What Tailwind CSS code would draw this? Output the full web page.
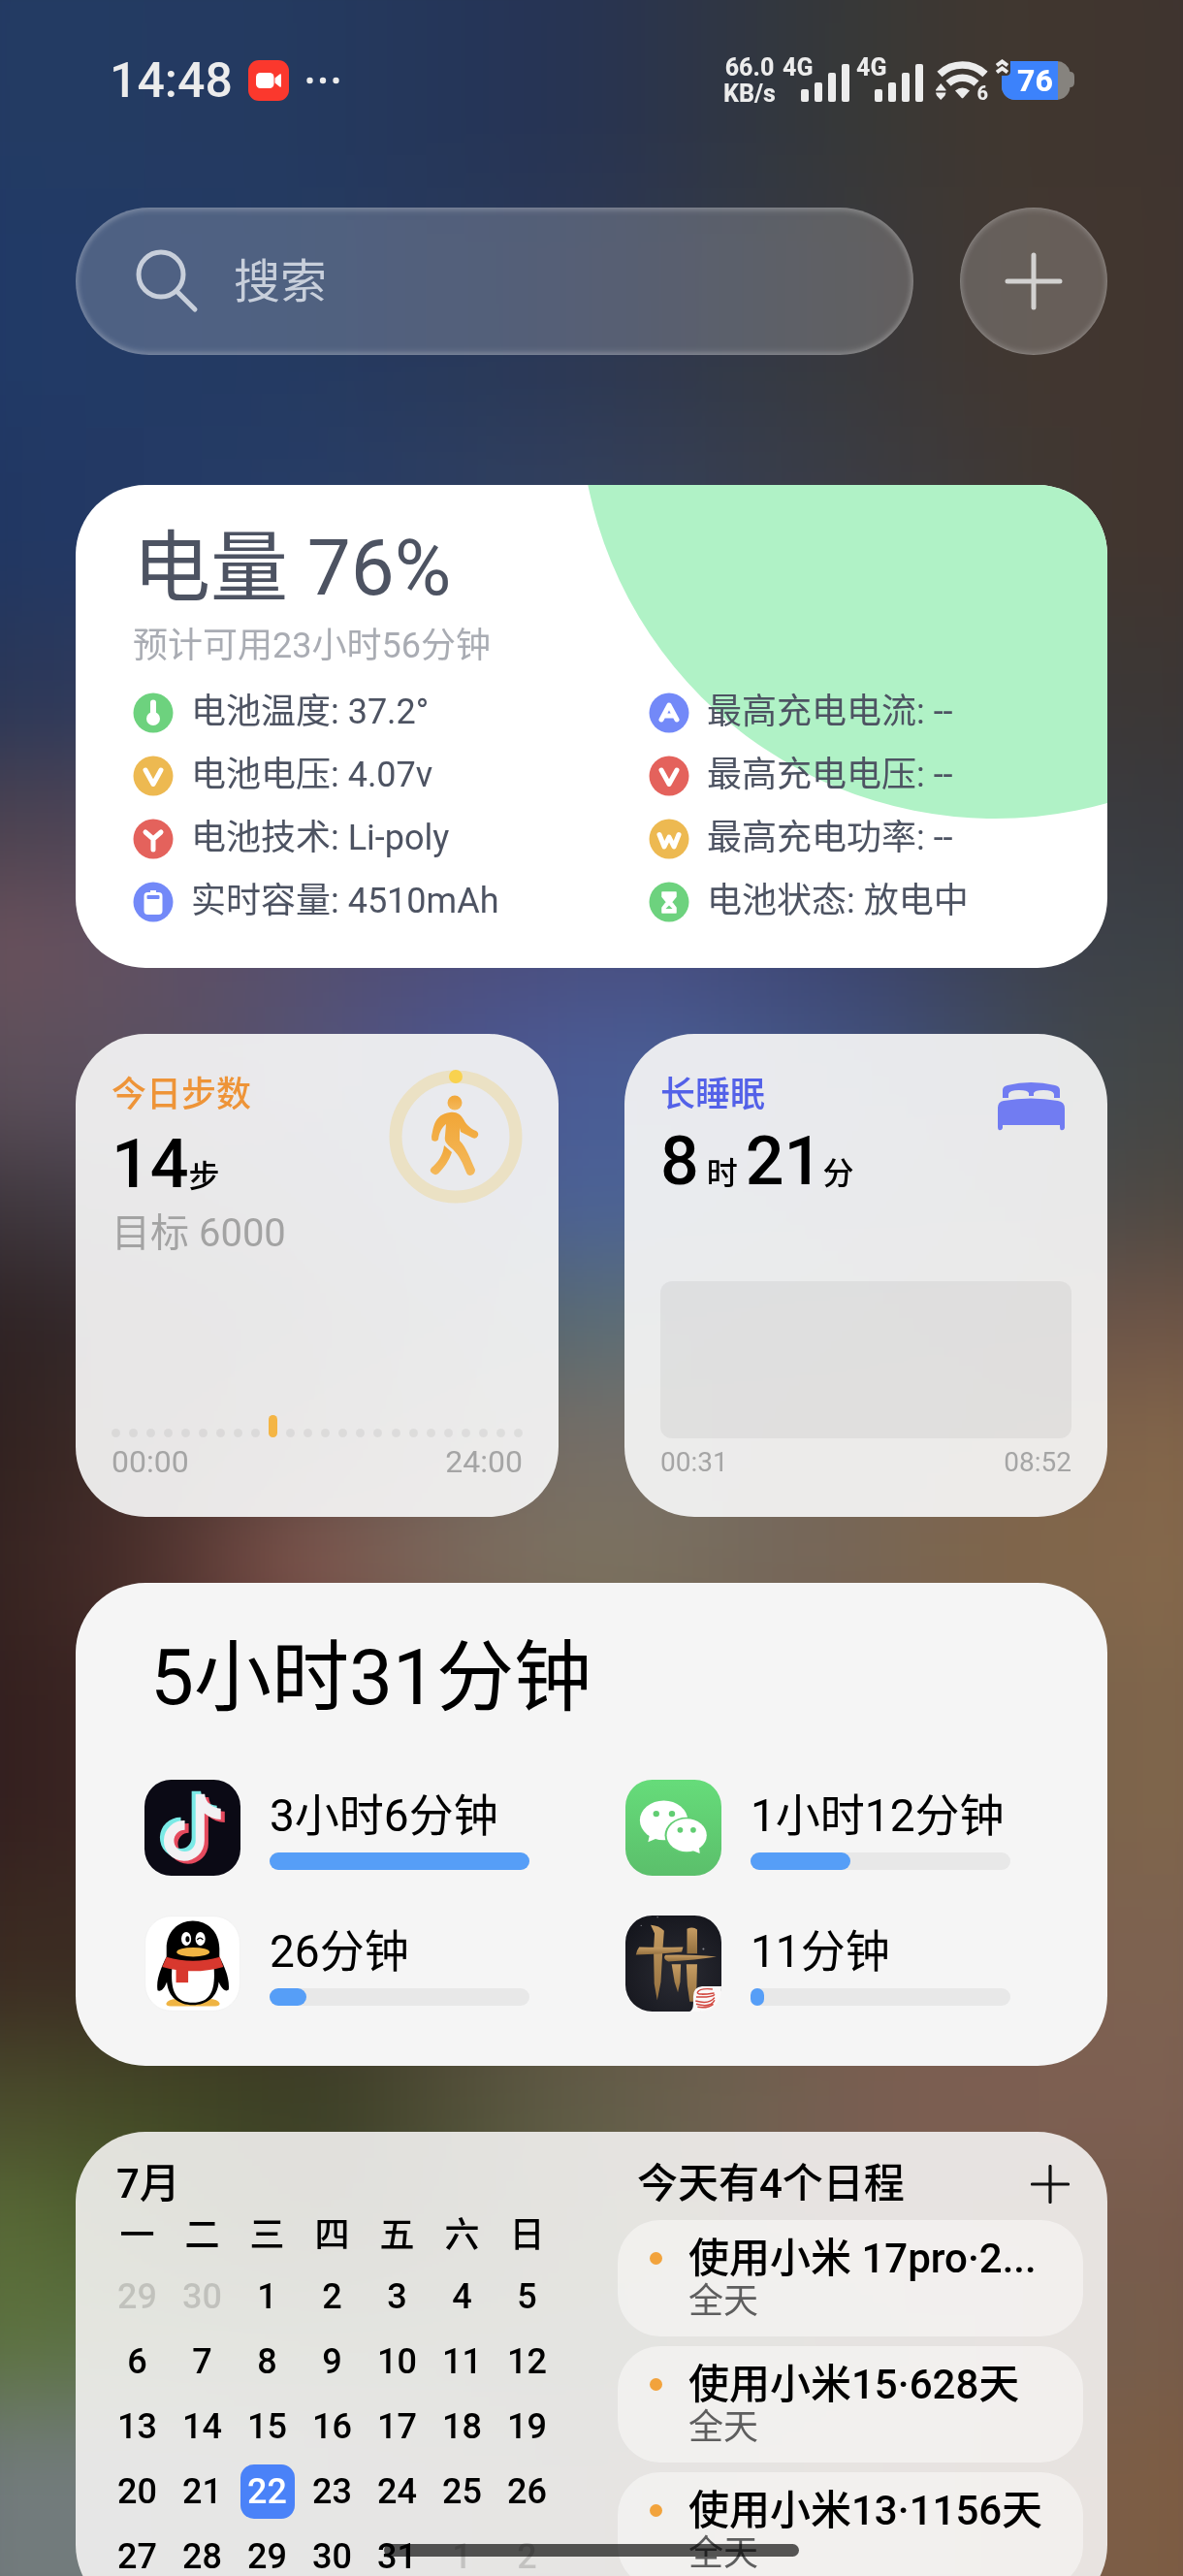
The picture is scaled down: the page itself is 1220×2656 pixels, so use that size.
<!DOCTYPE html>
<html lang="zh-CN">
<head>
<meta charset="utf-8">
<meta name="viewport" content="width=device-width, initial-scale=1">
<title>负一屏</title>
<script src="https://cdn.jsdelivr.net/npm/@tailwindcss/browser@4"></script>
</head>
<body class="bg-[#2b3040] font-[Roboto,'Noto_Sans_CJK_SC',sans-serif]">

<!-- Wallpaper: soft colour bands, larger than the screen so the blur has no pale rim -->
<div class="fixed inset-0 overflow-hidden" aria-hidden="true">
  <div class="absolute -inset-x-[100px] -inset-y-[110px] flex flex-col blur-[50px]">
    <div class="flex-[310] bg-[linear-gradient(90deg,#233b64_7%,#243a60_28%,#263354_48%,#363838_68%,#41372f_80%,#3f342f_93%)]"></div>
    <div class="flex-[250] bg-[linear-gradient(90deg,#213a67_7%,#243a62_28%,#2b3855_48%,#38393d_68%,#413730_80%,#41352f_93%)]"></div>
    <div class="flex-[200] bg-[linear-gradient(90deg,#213763_7%,#263c66_28%,#33405c_50%,#3c3c40_72%,#41362f_85%,#41352f_93%)]"></div>
    <div class="flex-[150] bg-[linear-gradient(90deg,#2a3757_7%,#37406a_32%,#3c4260_58%,#3c3836_85%,#3c3634_93%)]"></div>
    <div class="flex-[130] bg-[linear-gradient(90deg,#4c424f_7%,#504a66_32%,#4a4c78_50%,#3c4258_76%,#3a3b40_85%,#393a3e_93%)]"></div>
    <div class="flex-[130] bg-[linear-gradient(90deg,#6b525b_7%,#5c4f66_22%,#4c4e7c_41%,#484f82_54%,#3b4470_69%,#3d414b_83%,#3c4145_93%)]"></div>
    <div class="flex-[150] bg-[linear-gradient(90deg,#5c4f59_7%,#5a5062_20%,#4b5590_41%,#4a5f98_54%,#41507a_72%,#41474b_85%,#444644_93%)]"></div>
    <div class="flex-[120] bg-[linear-gradient(90deg,#3e363c_7%,#4a4450_24%,#4b649c_50%,#4b5f80_63%,#4c4a48_86%,#504840_93%)]"></div>
    <div class="flex-[120] bg-[linear-gradient(90deg,#2e2223_7%,#3a3034_24%,#5b7079_50%,#626865_63%,#6a5348_86%,#6f5546_93%)]"></div>
    <div class="flex-[130] bg-[linear-gradient(90deg,#30211f_7%,#4a3430_22%,#756c63_46%,#76706a_52%,#746658_67%,#7f6249_85%,#83664a_93%)]"></div>
    <div class="flex-[140] bg-[linear-gradient(90deg,#352320_7%,#4c302c_18%,#80544c_28%,#7d6c5e_41%,#7c7360_52%,#75665a_65%,#80664a_80%,#85684b_93%)]"></div>
    <div class="flex-[250] bg-[linear-gradient(90deg,#331f1e_7%,#4a302c_28%,#6a6050_50%,#77604c_80%,#80664b_93%)]"></div>
    <div class="flex-[170] bg-[linear-gradient(90deg,#3b2a21_7%,#3c3026_28%,#605845_50%,#7a5e50_76%,#7e6350_93%)]"></div>
    <div class="flex-[130] bg-[linear-gradient(90deg,#4b4b2d_7%,#434825_17%,#3b3e25_30%,#5e5943_46%,#6d6150_59%,#7c5d51_72%,#7d6052_93%)]"></div>
    <div class="flex-[130] bg-[linear-gradient(90deg,#5a6b38_7%,#4a5c2a_17%,#3d4028_30%,#5f6549_50%,#726052_63%,#795e50_76%,#785b4b_93%)]"></div>
    <div class="flex-[130] bg-[linear-gradient(90deg,#5d733f_7%,#5b7048_20%,#5b6454_50%,#706054_76%,#775c49_93%)]"></div>
    <div class="flex-[290] bg-[linear-gradient(90deg,#727b7c_7%,#727a7c_20%,#6a6862_50%,#7a6050_76%,#7d5c42_93%)]"></div>
  </div>
</div>

<div class="relative h-screen overflow-y-auto [scrollbar-width:none]">

  <!-- Status bar -->
  <header class="flex items-center justify-between h-[166px] pl-[113px] pr-28 text-[#ececec]">
    <div class="flex items-center">
      <time class="text-[50px] leading-[50px] font-medium">14:48</time>
      <svg class="ml-4 size-[42px]" viewBox="0 0 42 42" role="img" aria-label="录屏中">
        <rect width="42" height="42" rx="11" fill="#fb382d"/>
        <rect x="8" y="13" width="18.500" height="16" rx="4.500" fill="#fff"/>
        <path d="M27.500 18.500l5-4q1.500-.8 1.500.8v11.400q0 1.600-1.500.8l-5-4z" fill="#fff"/>
      </svg>
      <svg class="ml-[18px] w-[34px] h-2" viewBox="0 0 34 8" fill="currentColor" aria-hidden="true"><circle cx="3.500" cy="4" r="3.200"/><circle cx="17" cy="4" r="3.200"/><circle cx="30.500" cy="4" r="3.200"/></svg>
    </div>
    <div class="flex items-center h-[46px]">
      <div class="w-[54px] text-[25px] leading-[27px] font-extrabold whitespace-nowrap flex flex-col items-center"><span>66.0</span><span>KB/s</span></div>
      <div class="relative ml-[7px] w-[69px] h-[46px]">
        <span class="absolute left-0 top-[-4px] text-[25px] leading-[27px] font-extrabold">4G</span>
        <svg class="absolute right-0 bottom-0 w-[51px] h-10" viewBox="0 0 51 40" fill="currentColor" aria-hidden="true"><rect x="1" y="26" width="8" height="13" rx="2"/><rect x="15" y="19" width="8" height="20" rx="2"/><rect x="29" y="9" width="8" height="30" rx="2"/><rect x="43" y="0" width="8" height="39" rx="2"/></svg>
      </div>
      <div class="relative ml-[7px] w-[69px] h-[46px]">
        <span class="absolute left-0 top-[-4px] text-[25px] leading-[27px] font-extrabold">4G</span>
        <svg class="absolute right-0 bottom-0 w-[51px] h-10" viewBox="0 0 51 40" fill="currentColor" aria-hidden="true"><rect x="1" y="26" width="8" height="13" rx="2"/><rect x="15" y="19" width="8" height="20" rx="2"/><rect x="29" y="9" width="8" height="30" rx="2"/><rect x="43" y="0" width="8" height="39" rx="2"/></svg>
      </div>
      <div class="relative ml-[13px] w-[54px] h-[42px]">
        <svg class="w-[54px] h-[42px]" viewBox="0 0 54 42" fill="none" aria-hidden="true">
          <path d="M4 14.500A34 34 0 0 1 51 14.500" stroke="currentColor" stroke-width="7.500"/>
          <path d="M13 24A21 21 0 0 1 42 24" stroke="currentColor" stroke-width="7.500"/>
          <path d="M20 31.500Q27.500 25.500 35 31.500L28.500 38.800Q27.500 39.800 26.500 38.800Z" fill="currentColor"/>
          <path d="M5.200 24L10.500 30.500V31.500H0V30.500zM0 33.500H10.500L9.500 36.500 5.200 41 1 36.500z" fill="currentColor"/>
        </svg>
        <span class="absolute right-0 bottom-[-2px] text-[20px] leading-5 font-extrabold">6</span>
      </div>
      <div class="relative ml-2 w-[81px] h-[46px]">
        <svg class="w-[81px] h-[46px]" viewBox="0 0 81 46" aria-hidden="true">
          <path d="M15 3H63a14 14 0 0 1 13.500 11q4.500 0 4.500 5v6q0 5-4.500 5A14 14 0 0 1 63 43H20A14 14 0 0 1 6 29V18H11Q15 18 15 14Z" fill="#86837e"/>
          <path d="M15 3H64V43H20A14 14 0 0 1 6 29V18H11Q15 18 15 14Z" fill="#3c82fb"/>
          <path d="M1 7.500L6.500 3.500 12 7.500M1 14.500L6.500 10.500 12 14.500" fill="none" stroke="currentColor" stroke-width="4"/>
        </svg>
        <span class="absolute left-[22px] top-[7px] text-[32px] leading-8 font-extrabold text-white">76</span>
      </div>
    </div>
  </header>

  <main class="px-[78px] pt-12">
    <!-- Search -->
    <form class="flex gap-12">
      <label class="flex-1 flex items-center h-[152px] rounded-full pl-[58px] pr-12 bg-white/20 border border-white/20 shadow-[inset_0_2px_6px_rgba(255,255,255,0.2),inset_0_-2px_6px_rgba(255,255,255,0.2)]">
        <svg class="size-[72px] shrink-0 text-[#c8cfdb]" viewBox="0 0 72 72" fill="none" stroke="currentColor" stroke-width="5" stroke-linecap="round" aria-hidden="true"><circle cx="29" cy="29" r="23"/><path d="M45 46L64 65"/></svg>
        <input type="text" placeholder="搜索" aria-label="搜索" class="ml-8 flex-1 min-w-0 h-20 bg-transparent outline-none text-[48px] text-[#c8cfdb] placeholder:text-[#c8cfdb]">
      </label>
      <button type="button" aria-label="添加小部件" class="size-[152px] rounded-full flex items-center justify-center bg-white/20 border border-white/20 shadow-[inset_0_2px_6px_rgba(255,255,255,0.15),inset_0_-2px_6px_rgba(255,255,255,0.15)]">
        <svg class="size-[60px]" viewBox="0 0 60 60" stroke="#d2d1d0" stroke-width="5" stroke-linecap="round" aria-hidden="true"><path d="M30 3V57M3 30H57"/></svg>
      </button>
    </form>

    <!-- Battery -->
    <section class="relative mt-[134px] h-[498px] rounded-[72px] overflow-hidden bg-white px-[59px] pt-[38px] text-[#4d5362]">
      <div class="absolute right-[-312px] top-[-512px] size-[856px] rounded-full bg-[#b0f2c6]"></div>
      <div class="relative">
        <h2 class="text-[80px] leading-[96px]">电量 76%</h2>
        <p class="mt-2 text-[36px] leading-[48px] text-[#a9acb3]">预计可用23小时56分钟</p>
        <div class="mt-3 grid grid-cols-[532px_1fr] text-[36px] leading-[65px] whitespace-nowrap">
          <p class="flex items-center gap-[18px]"><svg class="size-[42px]" viewBox="0 0 42 42"><circle cx="21" cy="21" r="20.500" fill="#6dd27e"/><path d="M21 10.500V24" stroke="#fff" stroke-width="6" stroke-linecap="round"/><circle cx="21" cy="27" r="7" fill="#fff"/></svg>电池温度: 37.2°</p>
          <p class="flex items-center gap-[18px]"><svg class="size-[42px]" viewBox="0 0 42 42" fill="none" stroke="#fff" stroke-width="5" stroke-linecap="round" stroke-linejoin="round"><circle cx="21" cy="21" r="20.500" fill="#7389f8" stroke="none"/><path d="M13 28L21 13 29 28M16.500 24H25.500"/></svg>最高充电电流: --</p>
          <p class="flex items-center gap-[18px]"><svg class="size-[42px]" viewBox="0 0 42 42" fill="none" stroke="#fff" stroke-width="5" stroke-linecap="round" stroke-linejoin="round"><circle cx="21" cy="21" r="20.500" fill="#edb951" stroke="none"/><path d="M13 15L21 29.500 29 15"/></svg>电池电压: 4.07v</p>
          <p class="flex items-center gap-[18px]"><svg class="size-[42px]" viewBox="0 0 42 42" fill="none" stroke="#fff" stroke-width="5" stroke-linecap="round" stroke-linejoin="round"><circle cx="21" cy="21" r="20.500" fill="#e4625c" stroke="none"/><path d="M13 15L21 29.500 29 15"/></svg>最高充电电压: --</p>
          <p class="flex items-center gap-[18px]"><svg class="size-[42px]" viewBox="0 0 42 42" fill="none" stroke="#fff" stroke-width="5" stroke-linecap="round" stroke-linejoin="round"><circle cx="21" cy="21" r="20.500" fill="#e4625c" stroke="none"/><path d="M13 14L21 21 29 14M21 21V32"/></svg>电池技术: Li-poly</p>
          <p class="flex items-center gap-[18px]"><svg class="size-[42px]" viewBox="0 0 42 42" fill="none" stroke="#fff" stroke-width="5" stroke-linecap="round" stroke-linejoin="round"><circle cx="21" cy="21" r="20.500" fill="#edb951" stroke="none"/><path d="M11 16.500L16 29 21 19 26 29 31 16.500"/></svg>最高充电功率: --</p>
          <p class="flex items-center gap-[18px]"><svg class="size-[42px]" viewBox="0 0 42 42"><circle cx="21" cy="21" r="20.500" fill="#7389f8"/><path d="M18 9h6v2h2.500a4 4 0 0 1 4 4V30a4 4 0 0 1-4 4h-11a4 4 0 0 1-4-4V15a4 4 0 0 1 4-4H18z" fill="#fff"/><rect x="14.500" y="14" width="13" height="4" rx="1" fill="#7389f8"/></svg>实时容量: 4510mAh</p>
          <p class="flex items-center gap-[18px]"><svg class="size-[42px]" viewBox="0 0 42 42"><circle cx="21" cy="21" r="20.500" fill="#6dd27e"/><path d="M14 11h14v4.500l-4.500 5.500 4.500 6v5H14v-5l4.500-6L14 15.500z" fill="#fff" stroke="#fff" stroke-width="1.500" stroke-linejoin="round"/><path d="M17.500 28L21 24.500 24.500 28z" fill="#6dd27e"/></svg>电池状态: 放电中</p>
        </div>
      </div>
    </section>

    <div class="mt-[68px] grid grid-cols-2 gap-[68px]">
      <!-- Steps -->
      <section class="relative h-[498px] rounded-[72px] bg-[#f5f5f5]/93 px-[37px] pt-[43px] pb-[41px] flex flex-col">
        <h2 class="text-[36px] leading-10 font-medium text-[#ee9438]">今日步数</h2>
        <p class="mt-[11px] h-20 text-[70px] leading-20 font-medium text-black">14<span class="text-[32px]">步</span></p>
        <p class="mt-2 text-[40px] leading-[48px] text-[#a3a3a3]">目标 6000</p>
        <svg class="absolute right-[37px] top-[37px] size-[138px]" viewBox="0 0 138 138" role="img" aria-label="步行">
          <defs><linearGradient id="walk" x1="0" y1="0" x2="0" y2="1"><stop offset="0" stop-color="#f1a637"/><stop offset="1" stop-color="#f4b95c"/></linearGradient></defs>
          <circle cx="69" cy="69" r="62" fill="none" stroke="#ebe1c4" stroke-width="13"/>
          <circle cx="69" cy="7" r="7" fill="#f9d24f"/>
          <g transform="translate(43 26)" fill="url(#walk)">
            <circle cx="25" cy="8" r="7.500"/>
            <path d="M20 18C27 17 31 20 34 25C37 31 42 35 47 37Q50 39 49 42Q47 46 43 44L31 38L30 34L30 47C37 54 41 66 46 77Q46 82 41 83Q38 83 37 80C33 70 30 63 23 56C16 50 14 48 15 42L16 30C11 34 9 39 8 46Q6 49 2 47Q1 46 1 43C3 33 4 20 20 18Z"/>
            <path d="M14 52L22 59C19 68 14 75 8 81Q4 84 0 79Q-1 77 1 75C8 69 13 62 14 52Z"/>
          </g>
        </svg>
        <div class="mt-auto flex items-end justify-between h-6">
          <i class="size-[9px] rounded-full bg-black/6"></i><i class="size-[9px] rounded-full bg-black/6"></i><i class="size-[9px] rounded-full bg-black/6"></i><i class="size-[9px] rounded-full bg-black/6"></i><i class="size-[9px] rounded-full bg-black/6"></i><i class="size-[9px] rounded-full bg-black/6"></i><i class="size-[9px] rounded-full bg-black/6"></i><i class="size-[9px] rounded-full bg-black/6"></i><i class="size-[9px] rounded-full bg-black/6"></i><i class="w-[9px] h-[23px] rounded-full bg-[#f4b545]"></i><i class="size-[9px] rounded-full bg-black/6"></i><i class="size-[9px] rounded-full bg-black/6"></i><i class="size-[9px] rounded-full bg-black/6"></i><i class="size-[9px] rounded-full bg-black/6"></i><i class="size-[9px] rounded-full bg-black/6"></i><i class="size-[9px] rounded-full bg-black/6"></i><i class="size-[9px] rounded-full bg-black/6"></i><i class="size-[9px] rounded-full bg-black/6"></i><i class="size-[9px] rounded-full bg-black/6"></i><i class="size-[9px] rounded-full bg-black/6"></i><i class="size-[9px] rounded-full bg-black/6"></i><i class="size-[9px] rounded-full bg-black/6"></i><i class="size-[9px] rounded-full bg-black/6"></i><i class="size-[9px] rounded-full bg-black/6"></i>
        </div>
        <div class="mt-[9px] flex justify-between text-[32px] leading-8 text-[#a5a5a5]"><span>00:00</span><span>24:00</span></div>
      </section>

      <!-- Sleep -->
      <section class="relative h-[498px] rounded-[72px] bg-[#f5f5f5]/93 px-[37px] pt-[43px] pb-10 flex flex-col">
        <h2 class="text-[36px] leading-10 font-medium text-[#5361e8]">长睡眠</h2>
        <p class="mt-2 h-20 text-[70px] leading-20 font-medium text-black">8<span class="mx-2 text-[32px]">时</span>21<span class="text-[32px]">分</span></p>
        <svg class="absolute right-[44px] top-[50px] w-[70px] h-[50px]" viewBox="0 0 70 50" fill="#717cf2" role="img" aria-label="睡眠">
          <path d="M6 16V8Q6 4 11 3Q35-3 60 3Q65 4 65 8V16H59V12Q58 8 48 8Q39 8 38 11V14H33V11Q32 8 23 8Q13 8 12 12V16Z"/>
          <path d="M1 26Q1 20 7 19Q35 14 63 19Q70 20 70 27V47Q69 50 66 49Q65 49 65 44H6V47Q5 50 2 49Q1 49 1 46Z"/>
        </svg>
        <div class="mt-auto h-[162px] rounded-xl bg-black/5"></div>
        <div class="mt-2 flex justify-between text-[28px] leading-[33px] text-[#a5a5a5]"><span>00:31</span><span>08:52</span></div>
      </section>
    </div>

    <!-- Screen time -->
    <section class="mt-[68px] h-[498px] rounded-[72px] bg-[#f5f5f5] px-[71px] pt-[50px] text-black">
      <h2 class="pl-1.5 text-[80px] leading-[96px]">5小时31分钟</h2>
      <ul class="mt-[57px] grid grid-cols-2 gap-x-[70px] gap-y-[41px] text-[46px] leading-[52px] whitespace-nowrap">
        <li class="flex gap-[30px]">
          <svg class="size-[99px] shrink-0" viewBox="234 636 293 293" role="img" aria-label="抖音">
            <rect x="234" y="636" width="293" height="293" rx="82" fill="#0b0a15"/>
            <defs><path id="note" d="M390 680H418C420 706 440 722 467 724V757C448 757 431 750 417 738V822A62 62 0 1 1 357 760V789A33 33 0 1 0 390 822Z"/></defs>
            <use href="#note" transform="translate(12 9)" fill="#e54a5e"/>
            <use href="#note" transform="translate(-12 -9)" fill="#7aeae6"/>
            <use href="#note" fill="#f2f1f3"/>
          </svg>
          <div class="flex-1 mr-[29px] pt-[11px]"><p>3小时6分钟</p><div class="mt-3 h-[18px] rounded-full bg-[#e8e8e8]"><div class="h-full rounded-full bg-[#569ef7]" style="width:100%"></div></div></div>
        </li>
        <li class="flex gap-[30px]">
          <svg class="size-[99px] shrink-0" viewBox="74 165 293 296" preserveAspectRatio="none" role="img" aria-label="微信">
            <defs><linearGradient id="wx" x1="0" y1="0" x2="0" y2="1"><stop offset="0" stop-color="#66dc7a"/><stop offset="1" stop-color="#5bbf6b"/></linearGradient></defs>
            <rect x="74" y="165" width="293" height="296" rx="82" fill="url(#wx)"/>
            <ellipse cx="191" cy="290" rx="73" ry="61" fill="#fff"/><path d="M150 325L143 357L178 342Z" fill="#fff"/>
            <ellipse cx="260" cy="336" rx="66" ry="55" fill="#61cd72"/>
            <ellipse cx="261" cy="336" rx="61" ry="51" fill="#fff"/><path d="M298 365L301 392L275 382Z" fill="#fff"/>
            <g fill="#61cd72"><circle cx="168" cy="270" r="9.500"/><circle cx="216" cy="270" r="9.500"/><circle cx="241" cy="320" r="8.500"/><circle cx="281" cy="320" r="8.500"/></g>
          </svg>
          <div class="flex-1 mr-[29px] pt-[11px]"><p>1小时12分钟</p><div class="mt-3 h-[18px] rounded-full bg-[#e8e8e8]"><div class="h-full rounded-full bg-[#569ef7]" style="width:38.500%"></div></div></div>
        </li>
        <li class="flex gap-[30px]">
          <svg class="size-[99px] shrink-0" viewBox="234 1050 292 292" role="img" aria-label="QQ">
            <rect x="236" y="1052" width="288" height="288" rx="80" fill="#fff" stroke="#ececec" stroke-width="1.500"/>
            <path d="M300 1318Q305 1303 340 1304L381 1318L425 1304Q458 1303 463 1318Q462 1326 450 1326H313Q300 1326 300 1318Z" fill="#efb443"/>
            <path d="M301 1175V1150C301 1100 336 1066 381 1066S462 1100 462 1150V1175C478 1205 494 1245 490 1276C480 1284 467 1270 460 1252C456 1298 424 1322 381 1322S306 1298 302 1252C296 1270 284 1284 274 1278C268 1245 286 1205 301 1175Z"/>
            <path d="M318 1205H445C450 1270 440 1315 381 1315S313 1270 318 1205Z" fill="#fff"/>
            <path d="M301 1176Q381 1200 463 1176L474 1206Q381 1232 288 1206Z" fill="#d8382e"/><path d="M330 1208H367V1254H330Z" fill="#d8382e"/>
            <ellipse cx="361" cy="1121" rx="15" ry="21" fill="#fff"/><ellipse cx="404" cy="1121" rx="15" ry="21" fill="#fff"/>
            <ellipse cx="365" cy="1122" rx="6" ry="9"/><path d="M394 1124Q403 1112 412 1124" fill="none" stroke="#000" stroke-width="4"/>
            <ellipse cx="382" cy="1161" rx="50" ry="14" fill="#efb443"/>
          </svg>
          <div class="flex-1 mr-[29px] pt-[11px]"><p>26分钟</p><div class="mt-3 h-[18px] rounded-full bg-[#e8e8e8]"><div class="h-full rounded-full bg-[#569ef7]" style="width:14.300%"></div></div></div>
        </li>
        <li class="flex gap-[30px]">
          <svg class="size-[99px] shrink-0" viewBox="74 585 293 296" preserveAspectRatio="none" role="img" aria-label="游戏">
            <defs>
              <clipPath id="game"><rect x="74" y="585" width="293" height="296" rx="82"/></clipPath>
              <radialGradient id="night" cx=".55" cy=".6" r=".7"><stop offset="0" stop-color="#2b2c34"/><stop offset="1" stop-color="#14151c"/></radialGradient>
              <linearGradient id="gold" x1="0" y1="0" x2="0" y2="1"><stop offset="0" stop-color="#c79d63"/><stop offset="1" stop-color="#93703f"/></linearGradient>
            </defs>
            <g clip-path="url(#game)">
              <rect x="74" y="585" width="293" height="296" fill="url(#night)"/>
              <g fill="url(#gold)">
                <path d="M151 614Q178 616 192 632L187 700L182 790L171 846L162 795L160 690L163 640Z"/>
                <path d="M116 682Q180 684 250 682L246 697Q180 704 106 706Q108 692 116 682Z"/>
                <path d="M262 626Q280 618 293 628V702H262Z"/>
                <path d="M196 707Q260 704 352 712Q290 722 205 727Q186 718 196 707Z"/>
                <path d="M215 735H243L241 790L234 822L224 790Z"/>
                <path d="M260 735H293L290 850H270L263 800Z"/>
              </g>
            </g>
            <path d="M367 803H308Q281 805 281 835V855Q281 878 270 881H300Q367 878 367 803Z" fill="#faf9f9"/>
            <path d="M340 812Q300 808 294 822Q292 832 345 824M290 836Q340 838 346 828M288 848Q330 860 346 838M290 858Q335 870 346 846M294 867Q325 872 342 858" fill="none" stroke="#d2473f" stroke-width="4.500"/>
            <g fill="#8a8c93"><circle cx="312" cy="688" r="3"/><circle cx="122" cy="616" r="2"/><circle cx="172" cy="590" r="2"/></g>
          </svg>
          <div class="flex-1 mr-[29px] pt-[11px]"><p>11分钟</p><div class="mt-3 h-[18px] rounded-full bg-[#e8e8e8]"><div class="h-full rounded-full bg-[#569ef7]" style="width:5.200%"></div></div></div>
        </li>
      </ul>
    </section>

    <!-- Calendar -->
    <section class="mt-[68px] h-[498px] rounded-[72px] overflow-hidden bg-[#f5f4f3]/89 pl-[30px] pr-[25px] pt-[31px] flex justify-between text-black">
      <div>
        <h2 class="pl-3 text-[42px] leading-[46px] font-medium">7月</h2>
        <table class="table-fixed w-[469px] text-center text-[36px] leading-[56px] font-medium">
          <thead><tr class="h-[59px]"><th class="p-0 font-medium">一</th><th class="p-0 font-medium">二</th><th class="p-0 font-medium">三</th><th class="p-0 font-medium">四</th><th class="p-0 font-medium">五</th><th class="p-0 font-medium">六</th><th class="p-0 font-medium">日</th></tr></thead>
          <tbody>
            <tr class="h-[67px]"><td class="p-0 text-black/15">29</td><td class="p-0 text-black/15">30</td><td class="p-0">1</td><td class="p-0">2</td><td class="p-0">3</td><td class="p-0">4</td><td class="p-0">5</td></tr>
            <tr class="h-[67px]"><td class="p-0">6</td><td class="p-0">7</td><td class="p-0">8</td><td class="p-0">9</td><td class="p-0">10</td><td class="p-0">11</td><td class="p-0">12</td></tr>
            <tr class="h-[67px]"><td class="p-0">13</td><td class="p-0">14</td><td class="p-0">15</td><td class="p-0">16</td><td class="p-0">17</td><td class="p-0">18</td><td class="p-0">19</td></tr>
            <tr class="h-[67px]"><td class="p-0">20</td><td class="p-0">21</td><td class="p-0"><span class="block mx-auto size-14 rounded-[14px] bg-[#4a82f8] text-white">22</span></td><td class="p-0">23</td><td class="p-0">24</td><td class="p-0">25</td><td class="p-0">26</td></tr>
            <tr class="h-[67px]"><td class="p-0">27</td><td class="p-0">28</td><td class="p-0">29</td><td class="p-0">30</td><td class="p-0">31</td><td class="p-0 text-black/15">1</td><td class="p-0 text-black/15">2</td></tr>
          </tbody>
        </table>
      </div>
      <div class="w-[480px]">
        <div class="flex items-center justify-between pl-5 pr-[14px]">
          <h2 class="text-[42px] leading-[46px] font-medium">今天有4个日程</h2>
          <button type="button" aria-label="新建日程" class="size-10"><svg class="size-10" viewBox="0 0 40 40" stroke="#111" stroke-width="3.200" stroke-linecap="round"><path d="M20 1.500V38.500M1.500 20H38.500"/></svg></button>
        </div>
        <ul class="mt-[14px] flex flex-col gap-[10px]">
          <li class="relative h-[120px] rounded-[44px] bg-white/45 pl-[73px] pr-8 pt-4"><i class="absolute left-[33px] top-[33px] size-[13px] rounded-full bg-[#f2a33c]"></i><p class="text-[42px] leading-[48px] font-medium whitespace-nowrap">使用小米 17pro·2...</p><p class="text-[36px] leading-10 text-[#5e5e5e]">全天</p></li>
          <li class="relative h-[120px] rounded-[44px] bg-white/45 pl-[73px] pr-8 pt-4"><i class="absolute left-[33px] top-[33px] size-[13px] rounded-full bg-[#f2a33c]"></i><p class="text-[42px] leading-[48px] font-medium whitespace-nowrap">使用小米15·628天</p><p class="text-[36px] leading-10 text-[#5e5e5e]">全天</p></li>
          <li class="relative h-[120px] rounded-[44px] bg-white/45 pl-[73px] pr-8 pt-4"><i class="absolute left-[33px] top-[33px] size-[13px] rounded-full bg-[#f2a33c]"></i><p class="text-[42px] leading-[48px] font-medium whitespace-nowrap">使用小米13·1156天</p><p class="text-[36px] leading-10 text-[#5e5e5e]">全天</p></li>
        </ul>
      </div>
    </section>
  </main>
</div>

<!-- Home indicator -->
<div class="fixed bottom-5 left-1/2 -translate-x-1/2 w-[428px] h-[13px] rounded-full bg-black/65"></div>
</body>
</html>
